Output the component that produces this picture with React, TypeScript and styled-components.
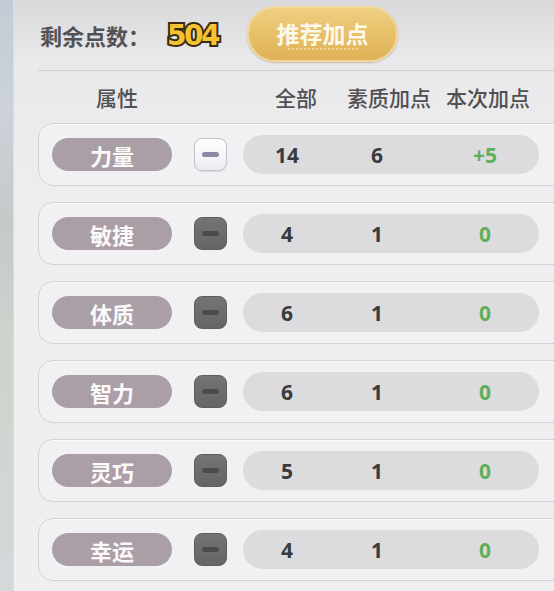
import React from 'react';
import styled, { createGlobalStyle } from 'styled-components';

const GlobalStyle = createGlobalStyle`
  html, body {
    margin: 0;
    padding: 0;
    overflow: hidden;
    background: #ececee;
  }
  body {
    font-family: "Noto Sans CJK SC", "Noto Sans", sans-serif;
  }
`;

// --- layout ---

const Screen = styled.div`
  display: flex;
  width: 554px;
  height: 591px;
  overflow: hidden;
`;

const SceneStrip = styled.div`
  width: 13px;
  flex-shrink: 0;
  background: linear-gradient(
    180deg,
    #c3cbd6 0%,
    #cbd2da 18%,
    #c4cac9 38%,
    #cad3cc 55%,
    #d0d5d0 72%,
    #d5d8db 100%
  );
`;

const Panel = styled.div`
  flex: 1;
  min-width: 0;
  border-left: 1px solid #dcdcdf;
  background: linear-gradient(180deg, #d9d9db 0px, #e9e9eb 60px, #eeedf0 200px, #efeef0 100%);
  padding-left: 24px;
  display: flex;
  flex-direction: column;
`;

const Header = styled.div`
  height: 70px;
  display: flex;
  align-items: center;
  padding-left: 2px;
  border-bottom: 1px solid #cfcfd2;
`;

const PointsLabel = styled.span`
  font-size: 22px;
  font-weight: 600;
  color: #525254;
`;

const PointsValue = styled.span`
  margin-left: 17px;
  font-family: "DejaVu Sans", "Liberation Sans", sans-serif;
  font-size: 28px;
  font-weight: 800;
  letter-spacing: -2.5px;
  color: #f4c430;
  -webkit-text-stroke: 4px #3b2a12;
  paint-order: stroke fill;
`;

const RecommendButton = styled.button`
  margin-left: 29px;
  width: 151px;
  height: 56px;
  margin-top: -3px;
  border-radius: 28px;
  border: 2px solid #f1d79b;
  background: linear-gradient(180deg, #efcf83 0%, #e6be66 55%, #dfb257 100%);
  box-shadow: 0 1px 2px rgba(120, 90, 30, 0.35);
  color: #fdf8ec;
  font-family: "Noto Sans CJK SC", sans-serif;
  font-size: 23px;
  font-weight: 600;
  position: relative;
  padding: 0 0 2px;
  cursor: pointer;

  &::after {
    content: '';
    position: absolute;
    left: 38px;
    right: 38px;
    bottom: 9px;
    height: 4px;
    background-image: radial-gradient(circle, rgba(255, 240, 200, 0.5) 0.8px, transparent 1px);
    background-size: 4px 4px;
  }
`;

const ColumnHeader = styled.div`
  display: grid;
  grid-template-columns: 156px 50px 102px 84px 114px;
  align-items: center;
  height: 52px;
  margin-left: 1px;
  font-size: 21px;
  font-weight: 500;
  color: #505052;
`;

const HeadCell = styled.span`
  text-align: center;
  white-space: nowrap;
`;

const Rows = styled.div`
  display: flex;
  flex-direction: column;
  gap: 16px;
  width: 540px;
`;

const RowCard = styled.div`
  box-sizing: border-box;
  height: 63px;
  border: 1.5px solid #d3d2d6;
  border-radius: 15px;
  background: #f1f0f2;
  display: flex;
  align-items: center;
  padding-left: 13px;
  box-shadow: inset 0 1px 0 #f8f8f9;
`;

const NamePill = styled.div`
  width: 120px;
  height: 33px;
  border-radius: 17px;
  background: #ab9fa7;
  color: #fbf9fa;
  font-size: 22px;
  font-weight: 700;
  display: flex;
  align-items: center;
  justify-content: center;
`;

const MinusButton = styled.div<{ $active: boolean }>`
  margin-left: 22px;
  width: 33px;
  height: 33px;
  box-sizing: border-box;
  border-radius: 8px;
  display: flex;
  align-items: center;
  justify-content: center;
  background: ${({ $active }) =>
    $active ? 'linear-gradient(180deg, #ffffff 0%, #ecebf2 100%)' : 'linear-gradient(180deg, #747474 0%, #656565 100%)'};
  border: ${({ $active }) => ($active ? '1.5px solid #c2c0c8' : '1px solid #5e5e5e')};
  box-shadow: ${({ $active }) => ($active ? '0 1px 1px rgba(0,0,0,0.08)' : 'none')};

  &::before {
    content: '';
    width: 17px;
    height: 5px;
    border-radius: 2.5px;
    background: ${({ $active }) => ($active ? '#8c88a3' : '#4b4b4b')};
  }
`;

const ValuesPill = styled.div`
  margin-left: 16px;
  width: 296px;
  height: 39px;
  border-radius: 20px;
  background: #dcdcdf;
  display: grid;
  grid-template-columns: 88px 92px 124px;
  align-items: center;
  font-family: "Noto Sans", "Noto Sans CJK SC", sans-serif;
  font-size: 21px;
  font-weight: 700;
  color: #3b3b3d;
`;

const Value = styled.span<{ $green?: boolean }>`
  text-align: center;
  color: ${({ $green }) => ($green ? '#5eae5c' : '#3b3b3d')};
`;

const stats = [
  { name: '力量', total: 14, base: 6, add: 5 },
  { name: '敏捷', total: 4, base: 1, add: 0 },
  { name: '体质', total: 6, base: 1, add: 0 },
  { name: '智力', total: 6, base: 1, add: 0 },
  { name: '灵巧', total: 5, base: 1, add: 0 },
  { name: '幸运', total: 4, base: 1, add: 0 },
];

export default function App() {
  return (
    <>
      <GlobalStyle />
      <Screen>
        <SceneStrip />
        <Panel>
          <Header>
            <PointsLabel>剩余点数：</PointsLabel>
            <PointsValue>504</PointsValue>
            <RecommendButton>推荐加点</RecommendButton>
          </Header>

          <ColumnHeader>
            <HeadCell>属性</HeadCell>
            <span />
            <HeadCell>全部</HeadCell>
            <HeadCell>素质加点</HeadCell>
            <HeadCell>本次加点</HeadCell>
          </ColumnHeader>

          <Rows>
            {stats.map((s) => (
              <RowCard key={s.name}>
                <NamePill>{s.name}</NamePill>
                <MinusButton $active={s.add > 0} />
                <ValuesPill>
                  <Value>{s.total}</Value>
                  <Value>{s.base}</Value>
                  <Value $green>{s.add > 0 ? `+${s.add}` : s.add}</Value>
                </ValuesPill>
              </RowCard>
            ))}
          </Rows>
        </Panel>
      </Screen>
    </>
  );
}
